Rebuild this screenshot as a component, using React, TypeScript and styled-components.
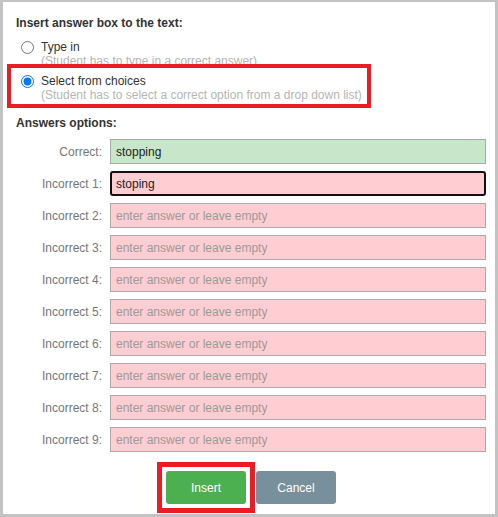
import { Fragment, useState } from "react";
import styled, { createGlobalStyle } from "styled-components";

const GlobalStyle = createGlobalStyle`
  body {
    margin: 0;
    background: #fff;
    font-family: "Liberation Sans", Arial, sans-serif;
  }
`;

const Dialog = styled.div`
  box-sizing: border-box;
  width: 498px;
  height: 517px;
  border: 3px solid #c3c3c3;
  border-top-width: 2px;
  padding: 14px 9px 0 13px;
  background: #fff;
  color: #333;
  font-size: 12px;
`;

const Heading = styled.div`
  font-weight: bold;
  font-size: 12px;
  line-height: 15px;
  color: #333;
`;

const Options = styled.div`
  display: flex;
  flex-direction: column;
  gap: 6px;
  margin: 9px 0 14px 5px;
`;

interface IOption {
  highlighted?: boolean;
}

const Option = styled.label<IOption>`
  position: relative;
  display: grid;
  grid-template-columns: 13px auto;
  column-gap: 7px;
  width: fit-content;
  cursor: pointer;
  &::after {
    content: "";
    display: ${(props) => (props.highlighted ? "block" : "none")};
    position: absolute;
    top: -10px;
    left: -14px;
    right: -9px;
    bottom: -6px;
    border: 4px solid #ed1c24;
    pointer-events: none;
  }
`;

const Radio = styled.input`
  margin: 1px 0 0;
  width: 13px;
  height: 13px;
  grid-row: 1;
  accent-color: #0075ff;
`;

const OptionTitle = styled.span`
  line-height: 14px;
  color: #333;
`;

const OptionHint = styled.span`
  grid-column: 2;
  line-height: 14px;
  color: #b5b5b5;
`;

const Rows = styled.div`
  display: grid;
  grid-template-columns: 86px 1fr;
  column-gap: 8px;
  row-gap: 7px;
  margin-top: 8px;
  align-items: center;
`;

const RowLabel = styled.label`
  text-align: right;
  color: #777;
  font-size: 12px;
`;

interface IAnswer {
  correct?: boolean;
  active?: boolean;
}

const AnswerInput = styled.input<IAnswer>`
  box-sizing: border-box;
  height: 25px;
  width: 100%;
  margin: 0;
  font-family: "Liberation Sans", Arial, sans-serif;
  font-size: 12px;
  color: #222;
  background: ${(props) => (props.correct ? "#c8e6c9" : "#ffcdd2")};
  border: ${(props) => (props.active ? "2px solid #111" : "1px solid #aaa")};
  border-radius: ${(props) => (props.active ? "3px" : "0")};
  padding: 0 5px 0 ${(props) => (props.active ? "4px" : "5px")};
  outline: none;
  &::placeholder {
    color: #9a9a9a;
  }
`;

const Buttons = styled.div`
  display: flex;
  justify-content: center;
  gap: 10px;
  margin-top: 19px;
`;

const Highlight = styled.div`
  display: flex;
  margin: -9px;
  padding: 4px;
  border: 5px solid #ed1c24;
`;

interface IButton {
  variant: "insert" | "cancel";
}

const Button = styled.button<IButton>`
  width: 80px;
  height: 33px;
  padding: 0;
  border: none;
  border-radius: 3px;
  color: #fff;
  font-family: "Liberation Sans", Arial, sans-serif;
  font-size: 12px;
  background-color: ${(props) =>
    props.variant === "insert" ? "#4caf50" : "#78909c"};
  cursor: pointer;
`;

const labels = [
  "Correct:",
  "Incorrect 1:",
  "Incorrect 2:",
  "Incorrect 3:",
  "Incorrect 4:",
  "Incorrect 5:",
  "Incorrect 6:",
  "Incorrect 7:",
  "Incorrect 8:",
  "Incorrect 9:",
];

function App() {
  const [mode, setMode] = useState("choices");
  const [answers, setAnswers] = useState<string[]>([
    "stopping",
    "stoping",
    "",
    "",
    "",
    "",
    "",
    "",
    "",
    "",
  ]);

  const onChange = (index: number, value: string) => {
    setAnswers((all) => all.map((a, i) => (i === index ? value : a)));
  };

  return (
    <>
      <GlobalStyle />
      <Dialog>
        <Heading>Insert answer box to the text:</Heading>
        <Options>
          <Option>
            <Radio
              type="radio"
              name="mode"
              checked={mode === "type"}
              onChange={() => setMode("type")}
            />
            <OptionTitle>Type in</OptionTitle>
            <OptionHint>(Student has to type in a correct answer)</OptionHint>
          </Option>
          <Option highlighted>
            <Radio
              type="radio"
              name="mode"
              checked={mode === "choices"}
              onChange={() => setMode("choices")}
            />
            <OptionTitle>Select from choices</OptionTitle>
            <OptionHint>
              (Student has to select a correct option from a drop down list)
            </OptionHint>
          </Option>
        </Options>
        <Heading>Answers options:</Heading>
        <Rows>
          {labels.map((label, index) => (
            <Fragment key={label}>
              <RowLabel>{label}</RowLabel>
              <AnswerInput
                type="text"
                correct={index === 0}
                active={index === 1}
                autoFocus={index === 1}
                value={answers[index]}
                placeholder="enter answer or leave empty"
                onChange={(e) => onChange(index, e.target.value)}
              />
            </Fragment>
          ))}
        </Rows>
        <Buttons>
          <Highlight>
            <Button variant="insert">Insert</Button>
          </Highlight>
          <Button variant="cancel">Cancel</Button>
        </Buttons>
      </Dialog>
    </>
  );
}

export default App;
